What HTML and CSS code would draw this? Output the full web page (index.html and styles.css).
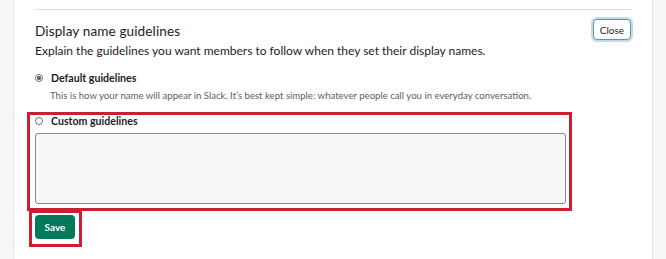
FILE: index.html
```html
<!DOCTYPE html>
<html lang="en">
<head>
  <meta charset="UTF-8">
  <meta name="viewport" content="width=device-width, initial-scale=1.0">
  <title>Display name guidelines</title>
  <link rel="stylesheet" href="styles.css">
</head>
<body>
  <div class="rail"></div>
  <div class="main">
    <div class="divider"></div>
    <div class="section-head">
      <div class="heading">Display name guidelines</div>
      <button class="btn-close">Close</button>
    </div>
    <div class="subtext">Explain the guidelines you want members to follow when they set their display names.</div>

    <label class="option">
      <input type="radio" name="guide" class="radio" checked>
      <span class="option-label">Default guidelines</span>
    </label>
    <div class="hint">This is how your name will appear in Slack. It’s best kept simple: whatever people call you in everyday conversation.</div>

    <label class="option option-custom">
      <input type="radio" name="guide" class="radio">
      <span class="option-label">Custom guidelines</span>
    </label>
    <textarea class="guide-text"></textarea>

    <button class="btn-save">Save</button>
  </div>
  <div class="rail rail-right"></div>

  <!-- highlight boxes drawn over the form -->
  <div class="mark mark-custom"></div>
  <div class="mark mark-save"></div>
</body>
</html>
```

FILE: styles.css
```css
body {
  margin: 0;
  padding: 0;
  font-family: Lato, "Noto Sans", Arial, sans-serif;
  background: #fff;
  color: #1d1c1d;
  display: flex;
  height: 259px;
  overflow: hidden;
  position: relative;
}
.rail {
  width: 13px;
  background: #f7f7f7;
  border-right: 1px solid #e3e3e3;
}
.rail-right {
  border-right: none;
  border-left: 1px solid #e3e3e3;
}
.main {
  flex: 1;
  padding: 0 21px;
}
.divider {
  margin-top: 9px;
  height: 1px;
  background: #dedede;
}
.section-head {
  display: flex;
  justify-content: space-between;
  align-items: flex-start;
}
.heading {
  font-size: 13.6px;
  line-height: 18px;
  margin-top: 12px;
  letter-spacing: 0.1px;
}
.btn-close {
  margin-top: 9px;
  width: 38px;
  height: 21px;
  padding: 0;
  font-family: inherit;
  font-size: 10px;
  color: #1d1c1d;
  background: #fff;
  border: 1px solid #6b8ea3;
  border-radius: 4px;
  box-shadow: 0 0 0 2px #c4dcea;
}
.subtext {
  font-size: 12px;
  line-height: 16px;
  margin-top: 3px;
  color: #1d1c1d;
}
.option {
  display: flex;
  align-items: center;
  gap: 8px;
  margin-top: 12px;
}
.radio {
  margin: 0;
  width: 8px;
  height: 8px;
  appearance: none;
  border: 1px solid #6f6f6f;
  border-radius: 50%;
  background: #fff;
}
.radio:checked {
  background: radial-gradient(circle, #6a6a6a 45%, #fff 55%);
}
.option-label {
  font-size: 10.6px;
  font-weight: bold;
  line-height: 14px;
}
.hint {
  font-size: 9.6px;
  line-height: 12px;
  color: #616061;
  margin: 5px 0 0 15px;
}
.option-custom {
  margin-top: 12px;
}
.guide-text {
  display: block;
  box-sizing: border-box;
  width: 531px;
  height: 71px;
  margin-top: 5px;
  background: #f7f7f7;
  border: 1px solid #888;
  border-radius: 3px;
  resize: none;
}
.btn-save {
  display: block;
  margin-top: 11px;
  width: 40px;
  height: 24px;
  padding: 0;
  font-family: inherit;
  font-size: 10px;
  font-weight: bold;
  color: #fff;
  background: #007a5a;
  border: none;
  border-radius: 4px;
}
.mark {
  position: absolute;
  border: 3px solid #cc1f2f;
}
.mark-custom {
  left: 27px;
  top: 112px;
  width: 539px;
  height: 93px;
}
.mark-save {
  left: 29px;
  top: 210px;
  width: 47px;
  height: 31px;
}
```
